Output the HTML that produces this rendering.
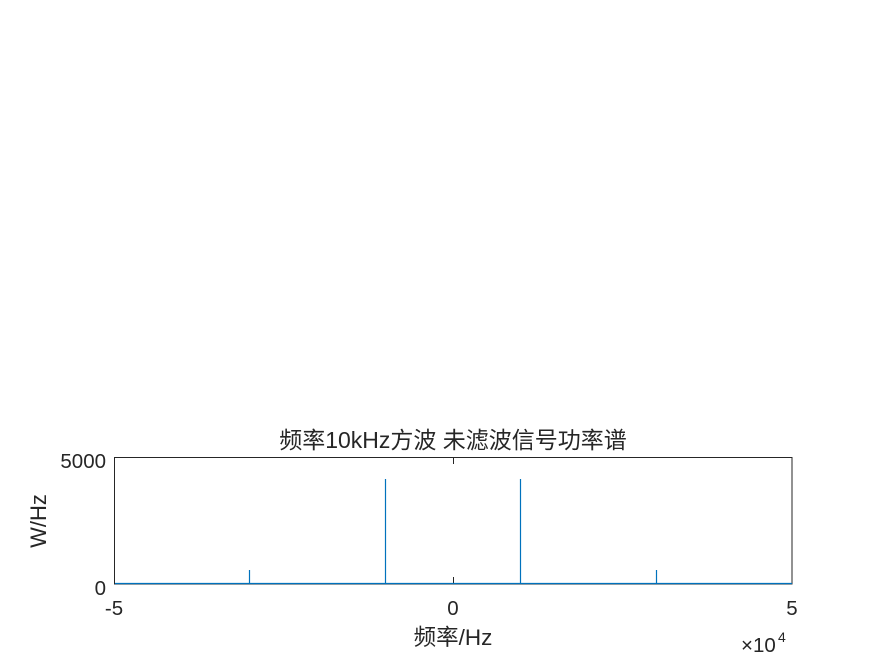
<!DOCTYPE html>
<html><head><meta charset="utf-8"><style>
html,body{margin:0;padding:0;background:#fff;width:875px;height:656px;overflow:hidden}
svg{display:block}
text{font-family:"Liberation Sans","Noto Sans CJK SC",sans-serif;fill:#262626}
</style></head><body>
<svg width="875" height="656" viewBox="0 0 875 656">
<rect x="114.5" y="457.5" width="677.5" height="126.5" fill="none" stroke="#262626" stroke-width="1"/>
<line x1="453.5" y1="457.5" x2="453.5" y2="464" stroke="#262626"/>
<line x1="453.5" y1="584" x2="453.5" y2="577" stroke="#262626"/>
<g stroke="#0072BD" stroke-width="1.2">
<line x1="115" y1="583.5" x2="792" y2="583.5"/>
<line x1="249.5" y1="584" x2="249.5" y2="570"/>
<line x1="385.5" y1="584" x2="385.5" y2="479"/>
<line x1="520.5" y1="584" x2="520.5" y2="479"/>
<line x1="656.5" y1="584" x2="656.5" y2="570"/>
</g>
<text x="453" y="448" font-size="23" text-anchor="middle">频率10kHz方波 未滤波信号功率谱</text>
<text x="106" y="468" font-size="20.5" text-anchor="end">5000</text>
<text x="106" y="595" font-size="20.5" text-anchor="end">0</text>
<text x="114" y="615" font-size="20.5" text-anchor="middle">-5</text>
<text x="453" y="615" font-size="20.5" text-anchor="middle">0</text>
<text x="792" y="615" font-size="20.5" text-anchor="middle">5</text>
<text x="453" y="645" font-size="22.5" text-anchor="middle">频率/Hz</text>
<text x="741" y="652" font-size="20.5">×10</text>
<text x="778" y="642" font-size="14">4</text>
<text transform="translate(46,521) rotate(-90)" font-size="22" text-anchor="middle">W/Hz</text>
</svg>
</body></html>
